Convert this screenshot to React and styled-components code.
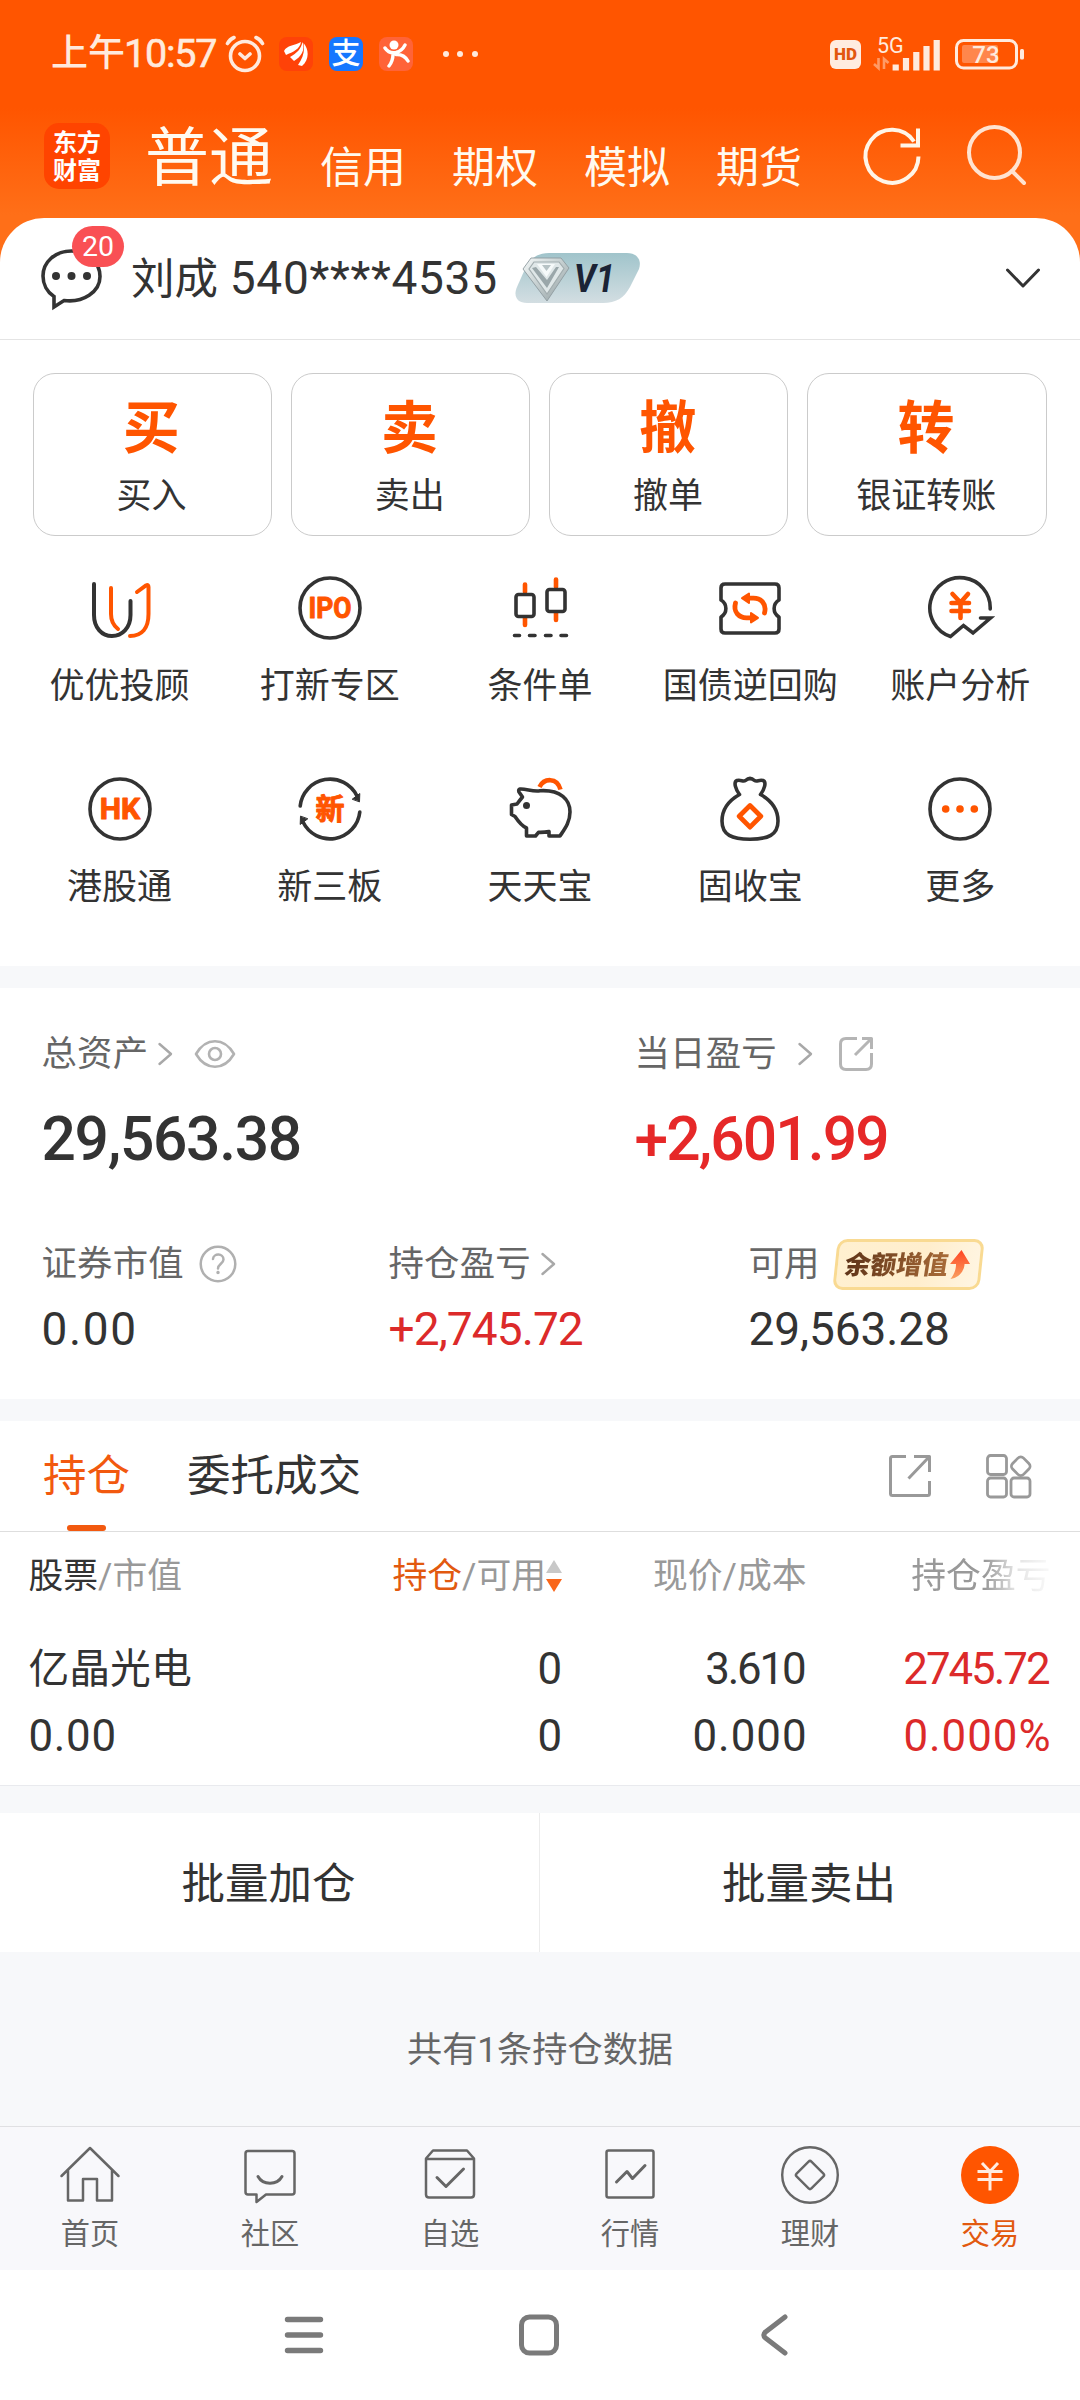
import React from "react";
import styled, { createGlobalStyle } from "styled-components";

const ORANGE = "#ff5500";
const INK = "#333333";
const RED = "#dc2a2a";

const GlobalStyle = createGlobalStyle`
  * { box-sizing: border-box; }
  body {
    margin: 0;
    background: #fff;
    font-family: Roboto, "Noto Sans CJK SC", sans-serif;
    color: ${INK};
  }
  svg { display: block; flex: none; }
`;

const Screen = styled.div`
  width: 1080px;
  height: 2400px;
  display: flex;
  flex-direction: column;
  background: #fff;
  overflow: hidden;
  white-space: nowrap;
`;

/* ---------- top ---------- */

const Top = styled.header`
  height: 262px;
  flex: none;
  background: linear-gradient(#ff5500 0, #ff5500 108px, #ff6f18 215px, #ff6f18 100%);
`;

const StatusBar = styled.div`
  height: 108px;
  padding: 0 56px 0 51px;
  display: flex;
  align-items: center;
  justify-content: space-between;
  color: #ffeadd;
`;

const StatusGroup = styled.div`
  display: flex;
  align-items: center;
`;

const Clock = styled.span`
  display: flex;
  align-items: center;
  width: 174px;
  font-size: 37px;
  line-height: 50px;
  font-weight: 500;
`;

const ClockDigits = styled.span`
  font-size: 39.5px;
  letter-spacing: -1.2px;
  margin-left: -1px;
  font-weight: 400;
  -webkit-text-stroke: 0.6px #ffeadd;
`;

const AppBadge = styled.span`
  width: 34px;
  height: 34px;
  margin-left: ${(p) => p.$gap}px;
  border-radius: 8px;
  background: ${(p) => p.$bg};
  display: flex;
  align-items: center;
  justify-content: center;
  color: #fff;
  font-size: 29px;
  line-height: 34px;
  font-weight: 500;
`;

const StatusDots = styled.span`
  display: flex;
  gap: 8.4px;
  margin-left: 30px;
  i {
    width: 6px;
    height: 6px;
    border-radius: 3px;
    background: #ffeadd;
  }
`;

const HdBadge = styled.span`
  width: 31px;
  height: 29px;
  border-radius: 6px;
  background: #ffece0;
  color: #e2570f;
  font-size: 17px;
  line-height: 29px;
  font-weight: 900;
  text-align: center;
`;

const NavBar = styled.nav`
  height: 110px;
  display: flex;
  padding-left: 44px;
  color: #fffaf0;
`;

const Logo = styled.div`
  width: 66px;
  height: 66px;
  margin-top: 15px;
  border-radius: 15px;
  background: #ff4400;
  display: flex;
  flex-direction: column;
  align-items: center;
  justify-content: center;
  color: #fff;
  font-size: 24px;
  font-weight: 700;
  line-height: 28px;
  padding-top: 1px;
`;

const NavTab = styled.span`
  width: ${(p) => (p.$active ? 174 : 132)}px;
  padding-left: ${(p) => (p.$active ? 35 : 0)}px;
  margin-top: ${(p) => (p.$active ? 11 : 20)}px;
  height: 80px;
  line-height: 80px;
  font-size: ${(p) => (p.$active ? 64 : 43)}px;
`;

const NavIcons = styled.div`
  display: flex;
  gap: 36px;
  margin: 12px 0 0 9px;
`;

/* ---------- account ---------- */

const Account = styled.section`
  height: 121px;
  flex: none;
  margin-top: -44px;
  padding: 0 36px 2px 36px;
  border-radius: 44px 44px 0 0;
  background: #fff;
  display: flex;
  align-items: center;
`;

const Message = styled.div`
  position: relative;
  width: 95px;
  height: 70px;
`;

const MessageCount = styled.span`
  position: absolute;
  left: 36px;
  top: -17px;
  width: 52px;
  height: 41px;
  border-radius: 21px;
  background: #f95054;
  color: #fff;
  font-size: 28.5px;
  line-height: 41px;
  text-align: center;
`;

const AccountName = styled.span`
  width: 384px;
  padding-top: 3px;
  font-size: 43.5px;
  line-height: 60px;
`;

const AccountNumber = styled.span`
  font-size: 46px;
  margin-left: 1px;
  letter-spacing: 0.7px;
`;

const Spacer = styled.div`
  flex: 1;
`;

/* ---------- shortcuts ---------- */

const Shortcuts = styled.section`
  height: 627px;
  flex: none;
  border-top: 1px solid #e4e4e4;
`;

const TradeButtons = styled.div`
  display: grid;
  grid-template-columns: repeat(4, 1fr);
  gap: 19px;
  padding: 33px 33.500px 0 32.500px;
`;

const TradeButton = styled.div`
  height: 163px;
  border: 1px solid #cbcbcb;
  border-radius: 22px;
  display: flex;
  flex-direction: column;
  align-items: center;
  b {
    margin-top: 19px;
    margin-right: 2px;
    height: 72px;
    line-height: 72px;
    font-size: 57px;
    font-weight: 700;
    color: ${ORANGE};
  }
  span {
    margin-top: 8px;
    margin-right: 1px;
    height: 48px;
    line-height: 48px;
    font-size: 35px;
  }
`;

const FunctionGrid = styled.div`
  display: grid;
  grid-template-columns: repeat(5, 210.2px);
  grid-auto-rows: 201px;
  padding: 37px 14px 0 14.500px;
`;

const FunctionItem = styled.div`
  display: flex;
  flex-direction: column;
  align-items: center;
  span {
    margin-top: 20px;
    height: 48px;
    line-height: 48px;
    font-size: 35px;
  }
`;

const Band = styled.div`
  flex: none;
  height: ${(p) => p.$h}px;
  background: #f7f8fa;
  border-top: ${(p) => (p.$line ? "1px solid #e9eaee" : "none")};
`;

/* ---------- assets ---------- */

const Assets = styled.section`
  height: 411px;
  flex: none;
  padding: 42px 0 0 41.500px;
`;

const AssetRow = styled.div`
  display: grid;
  grid-template-columns: ${(p) => p.$cols};
  margin-bottom: ${(p) => p.$after || 0}px;
`;

const AssetLabel = styled.div`
  height: 48px;
  display: flex;
  align-items: center;
  font-size: 35.4px;
  color: #666;
`;

const LabelText = styled.span`
  height: 48px;
  line-height: 48px;
  letter-spacing: 0.2px;
`;

const Gap = styled.i`
  width: ${(p) => p.$w}px;
  flex: none;
`;

const Amount = styled.div`
  margin-top: 25px;
  height: 74px;
  line-height: 74px;
  font-size: 60.5px;
  font-weight: 500;
  letter-spacing: ${(p) => p.$track || 0}px;
  color: ${(p) => p.$color || INK};
`;

const SubAmount = styled.div`
  margin-top: 11px;
  height: 60px;
  line-height: 60px;
  font-size: 46px;
  letter-spacing: ${(p) => p.$track || 0}px;
  color: ${(p) => p.$color || INK};
`;

const GrowthTag = styled.div`
  width: 147px;
  height: 51px;
  border: 3px solid #f9da92;
  border-radius: 10px;
  background: linear-gradient(100deg, #fff0d0, #ffeecd 60%, #fff5e2);
  transform: skewX(-6deg);
  display: flex;
  align-items: center;
  padding-left: 7px;
  span {
    font-size: 25.8px;
    font-weight: 900;
    line-height: 40px;
    transform: skewX(-3deg);
    background: linear-gradient(90deg, #5f3418, #a86b38);
    background-clip: text;
    color: transparent;
  }
`;

/* ---------- positions ---------- */

const TabRow = styled.div`
  height: 111px;
  flex: none;
  border-bottom: 1px solid #dedede;
  padding: 0 48px 0 43px;
  display: flex;
`;

const Tab = styled.div`
  height: 110px;
  margin-right: 57px;
  padding-top: 26px;
  display: flex;
  flex-direction: column;
  align-items: center;
  justify-content: space-between;
  font-size: 43.5px;
  line-height: 60px;
  color: ${(p) => (p.$active ? "#f2590f" : INK)};
  &::after {
    content: "";
    width: 39px;
    height: 6px;
    border-radius: 3px;
    background: ${(p) => (p.$active ? "#f2590f" : "transparent")};
  }
`;

const TabTools = styled.div`
  display: flex;
  gap: 53px;
  padding-top: 32px;
`;

const Table = styled.div`
  height: 253px;
  flex: none;
  padding: 20px 30px 0 28.500px;
`;

const TableRow = styled.div`
  display: grid;
  grid-template-columns: 240px 293.500px 244.500px 244px;
  height: ${(p) => p.$h}px;
  align-items: center;
`;

const TableBody = styled.div`
  margin-top: 35px;
`;

const HeadCell = styled.div`
  display: flex;
  align-items: center;
  justify-content: ${(p) => (p.$left ? "flex-start" : "flex-end")};
  font-size: 34.8px;
  line-height: 48px;
  color: #999;
  em {
    font-style: normal;
    color: ${(p) => p.$em || INK};
  }
  mask-image: ${(p) =>
    p.$fade ? "linear-gradient(90deg, #000 178px, rgba(0,0,0,.28) 208px, rgba(0,0,0,.05) 100%)" : "none"};
`;

const Cell = styled.div`
  text-align: ${(p) => (p.$left ? "left" : "right")};
  font-size: ${(p) => p.$size || 43.8}px;
  letter-spacing: ${(p) => p.$track || 0}px;
  margin-right: ${(p) => -(p.$track || 0)}px;
  line-height: 60px;
  color: ${(p) => p.$color || INK};
`;

const BatchRow = styled.div`
  height: 139px;
  flex: none;
  display: grid;
  grid-template-columns: 539px 1fr;
`;

const BatchButton = styled.div`
  display: flex;
  align-items: center;
  justify-content: center;
  padding: 0 2px 5px 0;
  font-size: 43.5px;
  & + & {
    border-left: 1px solid #ececec;
  }
`;

const Summary = styled.div`
  height: 174px;
  flex: none;
  background: #f7f8fa;
  padding-top: 70px;
  text-align: center;
  font-size: 35.2px;
  line-height: 56px;
  color: #666;
`;

/* ---------- bottom ---------- */

const TabBar = styled.footer`
  height: 144px;
  flex: none;
  border-top: 1px solid #e0e0e3;
  background: #f8f8fb;
  display: grid;
  grid-template-columns: repeat(6, 1fr);
`;

const TabBarItem = styled.div`
  display: flex;
  flex-direction: column;
  align-items: center;
  padding-top: 17px;
  font-size: 29.2px;
  line-height: 40px;
  color: ${(p) => (p.$active ? "#e2590f" : "#666")};
  span {
    margin-top: 8px;
  }
`;

const SystemNav = styled.div`
  height: 130px;
  flex: none;
  display: flex;
  justify-content: center;
  align-items: center;
  gap: 165px;
  padding-right: 2px;
`;

/* ---------- drawings ---------- */

const Glyph = ({ w = 70, h = w, stroke = INK, sw = 3.6, children }) => (
  <svg
    width={w}
    height={h}
    viewBox={`${-w / 2} ${-h / 2} ${w} ${h}`}
    fill="none"
    stroke={stroke}
    strokeWidth={sw}
    strokeLinecap="round"
    strokeLinejoin="round"
  >
    {children}
  </svg>
);

const MarkText = ({ y, size, width, children }) => (
  <text
    x="0"
    y={y}
    textAnchor="middle"
    fontFamily='Roboto, "Noto Sans CJK SC", sans-serif'
    fontWeight="700"
    fontSize={size}
    textLength={width}
    lengthAdjust="spacingAndGlyphs"
    fill={ORANGE}
    stroke={ORANGE}
    strokeWidth="1"
    strokeLinejoin="round"
  >
    {children}
  </text>
);

const UuIcon = () => (
  <Glyph sw={4}>
    <path d="M-26-24V7C-26 20-18 28-8 28S10.500 20 10.500 7V-7" />
    <path stroke={ORANGE} d="M-9-20V6C-9 13-6.500 17.500-2 21M17-16 26-22.600Q28.500-24 28.500-21V6C28.500 20 22 28 10 28" />
  </Glyph>
);

const IpoIcon = () => (
  <Glyph>
    <circle r="30" />
    <MarkText y={10.4} size={29.5} width={43}>IPO</MarkText>
  </Glyph>
);

const CandleIcon = () => (
  <Glyph>
    <g stroke={ORANGE} strokeWidth="4.600">
      <path d="M-15-23.500V-16M-15 10V17M16-28.500V-21M16 5V12" />
    </g>
    <rect x="-24" y="-13.500" width="18" height="22" rx="2.500" />
    <rect x="7" y="-18.500" width="18" height="22" rx="2.500" />
    <path d="M-25.500 27.500h5M-10.500 27.500h5.500M5.500 27.500h5.500M21 27.500h5.500" />
  </Glyph>
);

const SwapArrow = () => (
  <>
    <path d="M-14.500-5C-17 4-11 10-3 9.800H1" />
    <path fill={ORANGE} strokeWidth="2" d="M1 5 8 9.800 1 14.500Z" />
  </>
);

const TicketIcon = () => (
  <Glyph>
    <path d="M-25-24H25Q29-24 29-20V-8C22.500-4 22.500 5 29 9V21Q29 25 25 25H-25Q-29 25-29 21V9C-22.500 5-22.500-4-29-8V-20Q-29-24-25-24Z" />
    <g stroke={ORANGE} strokeWidth="4.800">
      <SwapArrow />
      <g transform="rotate(180)">
        <SwapArrow />
      </g>
    </g>
  </Glyph>
);

const AnalysisIcon = () => (
  <Glyph>
    <path strokeLinejoin="miter" d="M30.200 1A30.200 30.200 0 1 0-9.500 28.500L3.500 17.500 13 25 30.500 10H20.500" />
    <path stroke={ORANGE} strokeWidth="4.600" d="M-7.500-14 .5-5.500 8-14M-8.500-5H9M-8.500 3H9M.5-5V10" />
  </Glyph>
);

const HkIcon = () => (
  <Glyph>
    <circle r="30" />
    <MarkText y={10.4} size={29.5} width={40.5}>HK</MarkText>
  </Glyph>
);

const HalfRing = () => (
  <>
    <path d="M-29.800-3A30 30 0 0 1 27-13" />
    <path fill={INK} strokeWidth="1" d="M22.500-10 29.800-15.500 29.500-7.500Z" />
  </>
);

const NewBoardIcon = () => (
  <Glyph>
    <HalfRing />
    <g transform="rotate(180)">
      <HalfRing />
    </g>
    <MarkText y={10.6} size={29} width={29}>新</MarkText>
  </Glyph>
);

const PigIcon = () => (
  <Glyph>
    <path d="M0-18.300C-7-17-14-20.500-20-20Q-22-19.500-21-17L-17.500-12Q-20-9-23-5L-28.500-4V5.500L-25 7.500C-22 12-19 16.500-13.500 19V27H-4.500L-1.500 23.300Q4 23.500 9 22.500V27H20C25 19.500 30 13 30 3C30-9 21-19.500 0-18.300Z" />
    <circle cx="-13.500" cy="-3.500" r="3.500" fill={INK} stroke="none" />
    <path stroke={ORANGE} strokeWidth="4.600" strokeLinecap="butt" d="M-.5-22C4-31 17-32 20.500-19.500" />
  </Glyph>
);

const BagIcon = () => (
  <Glyph>
    <path d="M-10.500-14.500C-14-19-17-27-13-28.500C-9-29.500-7-27-4.500-28.500Q0-32.500 4.500-28.500C7-27 9-29.500 13-28.500C17-27 14-19 10.500-14.500C22-8 28 1 28 12C28 26 18 30.200 0 30.200S-28 26-28 12C-28 1-22-8-10.500-14.500Z" />
    <path stroke={ORANGE} strokeWidth="4.800" d="M0-3.500 10.800 7.300 0 18.100-10.800 7.300Z" />
  </Glyph>
);

const MoreIcon = () => (
  <Glyph>
    <circle r="30" />
    <g fill={ORANGE} stroke="none">
      <circle cx="-14.300" r="3.800" />
      <circle r="3.800" />
      <circle cx="14.300" r="3.800" />
    </g>
  </Glyph>
);

const Chevron = () => (
  <Glyph w={16} h={26} stroke="#a8a8a8" sw={2.4}>
    <path d="M-5.500-10 6 0-5.500 10" />
  </Glyph>
);

const EyeIcon = () => (
  <Glyph w={44} h={32} stroke="#b2b2b2" sw={2.6}>
    <path d="M-19 0C-9-17 9-17 19 0C9 17-9 17-19 0Z" />
    <circle r="6" />
  </Glyph>
);

const ShareRoundIcon = () => (
  <Glyph w={38} stroke="#b5b5b5" sw={3}>
    <path strokeLinecap="butt" d="M1-15.500H-10Q-15.500-15.500-15.500-10V10Q-15.500 15.500-10 15.500H10Q15.500 15.500 15.500 10V-1M6-15.500H15.500V-5M15-15-1 1" />
  </Glyph>
);

const HelpIcon = () => (
  <Glyph w={40} stroke="#b0b0b0" sw={2.5}>
    <circle r="17.300" />
    <path d="M-5-5C-4.500-11 5.500-11 5.500-4.500C5.500-.5 0 0 0 4.500" />
    <circle cy="8.500" r="1" fill="#b0b0b0" strokeWidth="1.500" />
  </Glyph>
);

const RiseArrow = () => (
  <svg width="24" height="30" viewBox="0 0 24 30">
    <defs>
      <linearGradient id="rise" x1="0" y1="0" x2="0" y2="1">
        <stop offset="0" stopColor="#ff4422" />
        <stop offset="1" stopColor="#f9a060" />
      </linearGradient>
    </defs>
    <path fill="url(#rise)" d="M12 0 22 14H16.500C17 21 12 28 4 29C7 25 8.500 20 8 14H2Z" />
  </svg>
);

const ShareIcon = () => (
  <Glyph w={46} stroke="#999" sw={3}>
    <path strokeLinecap="butt" d="M-4-19.500H-17.500Q-19.500-19.500-19.500-17.500V17.500Q-19.500 19.500-17.500 19.500H17.500Q19.500 19.500 19.500 17.500V5M4-19.500H19.500V-4M19-19-1.500 2.500" />
  </Glyph>
);

const WidgetsIcon = () => (
  <Glyph w={46} stroke="#999" sw={2.8}>
    <rect x="-21.500" y="-20.500" width="19" height="19" rx="3" />
    <rect x="-21.500" y="2" width="19" height="19" rx="3" />
    <rect x="2" y="2" width="19" height="19" rx="3" />
    <rect x="4" y="-17.500" width="15.500" height="15.500" rx="4" transform="rotate(45 11.750 -9.750)" />
  </Glyph>
);

const SortIcon = () => (
  <svg width="16" height="32" viewBox="0 0 16 32">
    <path fill="#c8c8c8" d="M8 0 16 13H0Z" />
    <path fill="#f9661a" d="M0 19H16L8 32Z" />
  </svg>
);

const VipBadge = () => (
  <svg width="126" height="50" viewBox="0 0 126 50">
    <defs>
      <linearGradient id="vip" x1="0" y1="0" x2="0" y2="1">
        <stop offset="0" stopColor="#a0c4cb" />
        <stop offset="1" stopColor="#d3dee2" />
      </linearGradient>
      <linearGradient id="gem" x1="0" y1="0" x2="1" y2="1">
        <stop offset="0" stopColor="#f4f8f8" />
        <stop offset="0.5" stopColor="#c2cccd" />
        <stop offset="1" stopColor="#8f9c9f" />
      </linearGradient>
    </defs>
    <path fill="url(#vip)" d="M34 0H112C122 0 127 7 124 16L115 34C109 45 101 50 88 50H12C2 50-2 43 2 34L10 16C15 5 23 0 34 0Z" />
    <path fill="url(#gem)" stroke="#8f9b9f" strokeWidth="0.900" d="M16 5H46L54 15 32 48 8 16Z" />
    <path fill="#dfe7e8" stroke="#a2adaf" strokeWidth="1.200" d="M19 9H44L49 15.500 32 41 14 16Z" />
    <path fill="#9aa7aa" d="M21 14 32 27 41 14H44L32 35 17 15Z" />
    <path fill="#f6fafa" d="M22 11H40L31.500 24Z" />
    <path fill="#b7c3c5" d="M27 12H36L31.500 18Z" />
    <text x="59" y="38.500" fontFamily="Roboto, sans-serif" fontStyle="italic" fontWeight="700" fontSize="38" textLength="41" lengthAdjust="spacingAndGlyphs" fill="#1b2335">
      V1
    </text>
  </svg>
);

const HomeIcon = () => (
  <Glyph w={62} stroke="#666" sw={2.5}>
    <path d="M-28.500 1 0-27 28.500 1M-22-5V25.500H-7V4H7V25.500H22V-5" />
  </Glyph>
);
const CommunityIcon = () => (
  <Glyph w={62} stroke="#666" sw={2.5}>
    <path d="M-22-24H22Q24.500-24 24.500-21.500V17Q24.500 19.500 22 19.500H-4L-13.500 27V19.500H-22Q-24.500 19.500-24.500 17V-21.500Q-24.500-24-22-24Z" />
    <path strokeWidth="3" d="M-12 1.500C-7 10.500 7 10.500 12 1.500" />
  </Glyph>
);
const WatchIcon = () => (
  <Glyph w={62} stroke="#666" sw={2.5}>
    <path d="M-17-24.500H17L24-16.500V19.500Q24 22.500 21 22.500H-21Q-24 22.500-24 19.500V-16.500ZM-24-16H24" />
    <path strokeWidth="3" d="M-13 2.500-4 11.500 13.500-6" />
  </Glyph>
);
const QuoteIcon = () => (
  <Glyph w={62} stroke="#666" sw={2.5}>
    <rect x="-23.500" y="-24.500" width="47" height="47" rx="2" />
    <path strokeWidth="3" d="M-13.500 7-3-3.500 2.500 3.500 15-9.500" />
  </Glyph>
);
const WealthIcon = () => (
  <Glyph w={62} stroke="#666" sw={2.4}>
    <circle r="27.800" />
    <rect x="-10.500" y="-10.500" width="21" height="21" rx="2" transform="rotate(45)" />
  </Glyph>
);
const TradeIcon = () => (
  <Glyph w={62} stroke="#ffece0" sw={3}>
    <circle r="29" fill={ORANGE} stroke="none" />
    <path strokeLinecap="butt" d="M-8-12 0-3.500 8-12M-12.500-3.500H12.500M-12.500 4.500H12.500M0-3.500V15.500" />
  </Glyph>
);

const functions = [
  ["优优投顾", UuIcon],
  ["打新专区", IpoIcon],
  ["条件单", CandleIcon],
  ["国债逆回购", TicketIcon],
  ["账户分析", AnalysisIcon],
  ["港股通", HkIcon],
  ["新三板", NewBoardIcon],
  ["天天宝", PigIcon],
  ["固收宝", BagIcon],
  ["更多", MoreIcon],
];

const tabs = [
  ["首页", HomeIcon],
  ["社区", CommunityIcon],
  ["自选", WatchIcon],
  ["行情", QuoteIcon],
  ["理财", WealthIcon],
  ["交易", TradeIcon],
];

export default function App() {
  return (
    <Screen>
      <GlobalStyle />
      <Top>
        <StatusBar>
          <StatusGroup>
            <Clock>
              上午<ClockDigits>10:57</ClockDigits>
            </Clock>
            <Glyph w={40} stroke="#ffeadd" sw={3.6}>
              <circle cy="2" r="14.500" />
              <path d="M-5 0 0 4.500 5 0M-17.500-10.500Q-15.500-14.500-11-16.500M17.500-10.500Q15.500-14.500 11-16.500" />
            </Glyph>
            <AppBadge $bg="#ff4208" $gap={14}>
              <svg width="26" height="26" viewBox="0 0 26 26" fill="#fff">
                <path d="M1 10C4 4 11 5 18 1C17 8 10 11 3 14Z" />
                <path d="M7 16C14 12 18 8 19.500 1C22.500 9 18 16 11 20Z" />
                <path d="M15 24C20 17 22 10 20.500 2C26.500 9 26 19 19 25Z" />
              </svg>
            </AppBadge>
            <AppBadge $bg="#1677ff" $gap={16}>支</AppBadge>
            <AppBadge $bg="#ff6338" $gap={16}>
              <svg width="28" height="30" viewBox="0 0 28 30" fill="none" stroke="#fff" strokeWidth="3.400" strokeLinecap="round">
                <circle cx="12" cy="6" r="4.500" fill="#fff" stroke="none" />
                <path d="M3 9Q7 15 14 13.500Q20 12 23 6M11 15Q11 22 7 27M14 15.500Q22 15 26 22" />
              </svg>
            </AppBadge>
            <StatusDots>
              <i />
              <i />
              <i />
            </StatusDots>
          </StatusGroup>
          <StatusGroup>
            <HdBadge>HD</HdBadge>
            <svg width="69" height="40" viewBox="872 34 69 40" style={{ marginLeft: 11 }}>
              <text x="877" y="52.500" fontFamily="Roboto, sans-serif" fontSize="21.500" fill="#ffeadd">5G</text>
              <path fill="none" stroke="#ff9a66" strokeWidth="2.600" d="M878.500 58V68L874 64M884 69V59L888.500 63" />
              <g stroke="#ffeadd" strokeWidth="6.200">
                <path d="M895.700 64.500V70.500M906 58V70.500M916.300 52V70.500M926.500 46V70.500M936.700 40V70.500" />
              </g>
            </svg>
            <svg width="70" height="32" viewBox="953 38 70 32" style={{ marginLeft: 13 }}>
              <rect x="961" y="45" width="36" height="18" rx="2" fill="#ff864c" />
              <rect x="955.500" y="40.500" width="60" height="27.500" rx="7" fill="none" stroke="#ffeadd" strokeWidth="3" />
              <rect x="1019" y="49" width="4" height="10.500" rx="1.500" fill="#ffeadd" />
              <text x="985" y="62.700" textAnchor="middle" fontFamily="Roboto, sans-serif" fontWeight="500" fontSize="24" fill="#ffeadd">73</text>
            </svg>
          </StatusGroup>
        </StatusBar>
        <NavBar>
          <Logo>
            <span>东方</span>
            <span>财富</span>
          </Logo>
          <NavTab $active>普通</NavTab>
          <Gap $w={36} />
          <NavTab>信用</NavTab>
          <NavTab>期权</NavTab>
          <NavTab>模拟</NavTab>
          <NavTab>期货</NavTab>
          <NavIcons>
            <Glyph w={70} stroke="#fff5e8" sw={4}>
              <path strokeLinecap="butt" strokeLinejoin="miter" d="M26.500 1.500A26.500 26.500 0 1 1 22-13.500" />
              <path strokeLinecap="butt" strokeLinejoin="miter" d="M26-26.500V-9.500H8.500" />
            </Glyph>
            <Glyph w={70} stroke="#ffe3d0" sw={4}>
              <circle cx="-3.500" cy="-2.500" r="25.500" />
              <path d="M14 16 26 28" />
            </Glyph>
          </NavIcons>
        </NavBar>
      </Top>

      <Account>
        <Message>
          <Glyph w={70} sw={3.6}>
            <path strokeLinejoin="miter" d="M-17 29V18.500C-24 14-28 6-28-2C-28-16-16-27 .5-27S29-16 29-1.500C29 14 12 25-7 22.500Z" />
            <g fill={INK} stroke="none">
              <circle cx="-15" cy="-2" r="4" />
              <circle cx="0.500" cy="-2" r="4" />
              <circle cx="16" cy="-2" r="4" />
            </g>
          </Glyph>
          <MessageCount>20</MessageCount>
        </Message>
        <AccountName>
          刘成 <AccountNumber>540****4535</AccountNumber>
        </AccountName>
        <VipBadge />
        <Spacer />
        <Glyph w={42} h={30} sw={3}>
          <path d="M-15.500-8 0 8 15.500-8" />
        </Glyph>
      </Account>

      <Shortcuts>
        <TradeButtons>
          {[["买", "买入"], ["卖", "卖出"], ["撤", "撤单"], ["转", "银证转账"]].map(([mark, label]) => (
            <TradeButton key={label}>
              <b>{mark}</b>
              <span>{label}</span>
            </TradeButton>
          ))}
        </TradeButtons>
        <FunctionGrid>
          {functions.map(([label, Icon]) => (
            <FunctionItem key={label}>
              <Icon />
              <span>{label}</span>
            </FunctionItem>
          ))}
        </FunctionGrid>
      </Shortcuts>

      <Band $h={22} />

      <Assets>
        <AssetRow $cols="593px 1fr" $after={63}>
          <div>
            <AssetLabel>
              <LabelText>总资产</LabelText><Gap $w={9} /><Chevron /><Gap $w={20} /><EyeIcon />
            </AssetLabel>
            <Amount $track={-1.3}>29,563.38</Amount>
          </div>
          <div>
            <AssetLabel>
              <LabelText>当日盈亏</LabelText><Gap $w={20} /><Chevron /><Gap $w={24} /><ShareRoundIcon />
            </AssetLabel>
            <Amount $color="#e62828" $track={-1.9}>+2,601.99</Amount>
          </div>
        </AssetRow>
        <AssetRow $cols="347px 360px 1fr">
          <div>
            <AssetLabel>
              <LabelText>证券市值</LabelText><Gap $w={14} /><HelpIcon />
            </AssetLabel>
            <SubAmount $track={1.6}>0.00</SubAmount>
          </div>
          <div>
            <AssetLabel>
              <LabelText>持仓盈亏</LabelText><Gap $w={9} /><Chevron />
            </AssetLabel>
            <SubAmount $color={RED} $track={-0.9}>+2,745.72</SubAmount>
          </div>
          <div>
            <AssetLabel>
              <LabelText>可用</LabelText><Gap $w={15} />
              <GrowthTag>
                <span>余额增值</span>
                <RiseArrow />
              </GrowthTag>
            </AssetLabel>
            <SubAmount $track={-0.1}>29,563.28</SubAmount>
          </div>
        </AssetRow>
      </Assets>

      <Band $h={22} />

      <TabRow>
        <Tab $active>持仓</Tab>
        <Tab>委托成交</Tab>
        <Spacer />
        <TabTools>
          <ShareIcon />
          <WidgetsIcon />
        </TabTools>
      </TabRow>
      <Table>
        <TableRow $h={48}>
          <HeadCell $left>
            <em>股票</em>/市值
          </HeadCell>
          <HeadCell $em="#e2590f">
            <em>持仓</em>/可用
            <SortIcon />
          </HeadCell>
          <HeadCell>现价/成本</HeadCell>
          <HeadCell $fade>持仓盈亏</HeadCell>
        </TableRow>
        <TableBody>
          <TableRow $h={67}>
            <Cell $left $size={40.8}>亿晶光电</Cell>
            <Cell>0</Cell>
            <Cell $track={-2.2}>3.610</Cell>
            <Cell $color={RED} $track={-2}>2745.72</Cell>
          </TableRow>
          <TableRow $h={67}>
            <Cell $left $track={0.7}>0.00</Cell>
            <Cell>0</Cell>
            <Cell $track={1}>0.000</Cell>
            <Cell $color={RED} $track={1}>0.000%</Cell>
          </TableRow>
        </TableBody>
      </Table>

      <Band $h={28} $line />

      <BatchRow>
        <BatchButton>批量加仓</BatchButton>
        <BatchButton>批量卖出</BatchButton>
      </BatchRow>
      <Summary>共有1条持仓数据</Summary>

      <TabBar>
        {tabs.map(([label, Icon]) => (
          <TabBarItem key={label} $active={label === "交易"}>
            <Icon />
            <span>{label}</span>
          </TabBarItem>
        ))}
      </TabBar>
      <SystemNav>
        <Glyph w={70} stroke="#7a7a7a" sw={5.4}>
          <path d="M-16.500-15.500H16.500M-16.500 0H16.500M-16.500 15.500H16.500" />
        </Glyph>
        <Glyph w={70} stroke="#7a7a7a" sw={5}>
          <rect x="-17.500" y="-18" width="35" height="36" rx="8" />
        </Glyph>
        <Glyph w={70} stroke="#7a7a7a" sw={5}>
          <path d="M11-18-8.500-3Q-12 0-8.500 3L11 18" />
        </Glyph>
      </SystemNav>
    </Screen>
  );
}
